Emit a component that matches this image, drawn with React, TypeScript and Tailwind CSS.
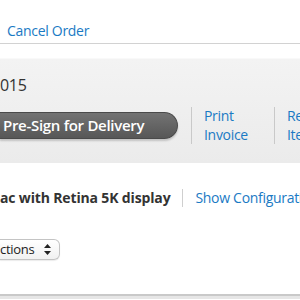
const font = { fontFamily: '"Open Sans", "Liberation Sans", sans-serif' };

function UpDownArrows() {
  return (
    <svg width="7" height="11" viewBox="0 0 7 11" className="shrink-0">
      <path d="M3.5 0 L7 4 L0 4 Z" fill="#222" />
      <path d="M3.5 11 L7 7 L0 7 Z" fill="#222" />
    </svg>
  );
}

export default function App() {
  return (
    <div
      className="w-[300px] h-[300px] overflow-hidden bg-white text-[14px] tracking-[-0.3px] text-[#333]"
      style={font}
    >
      {/* top actions */}
      <div className="h-[44px] border-b border-[#d2d2d2] pl-[7px] pt-[20px]">
        <a className="text-[#1a7ac4] leading-[20px]">Cancel Order</a>
      </div>
      <div className="h-[14px]" />

      {/* order summary band */}
      <div className="h-[105px] border-t border-[#f9f9f9] bg-gradient-to-b from-[#f3f3f3] to-[#ebebeb]">
        <div className="pt-[16px] text-[16px] leading-[20px] text-[#333] whitespace-nowrap">
          015
        </div>
        <div className="mt-[11px] flex items-center whitespace-nowrap">
          <button className="h-[27px] w-[178px] shrink-0 rounded-r-full border border-l-0 border-[#4a4a4a] bg-gradient-to-b from-[#737373] to-[#575757] pl-[3px] text-left text-[15px] font-semibold leading-[25px] tracking-[-0.3px] text-white shadow-[0_2px_2px_rgba(0,0,0,0.18)]">
            Pre-Sign for Delivery
          </button>
          <div className="ml-[13px] h-[37px] w-px shrink-0 bg-[#c9c9c9]" />
          <a className="ml-[12px] w-[70px] shrink-0 leading-[19px] text-[#1a7ac4]">
            Print
            <br />
            Invoice
          </a>
          <div className="h-[37px] w-px shrink-0 bg-[#c9c9c9]" />
          <a className="ml-[12px] shrink-0 leading-[19px] text-[#1a7ac4]">
            Return
            <br />
            Items
          </a>
        </div>
      </div>

      {/* product line */}
      <div className="mt-[25px] flex items-center whitespace-nowrap">
        <span className="font-bold tracking-[-0.15px] text-[#333] leading-[20px]">ac with Retina 5K display</span>
        <div className="ml-[12px] h-[18px] w-px shrink-0 bg-[#cfcfcf]" />
        <a className="ml-[12px] text-[#1a7ac4] leading-[20px]">Show Configuration</a>
      </div>

      {/* actions select */}
      <div className="mt-[31px] flex">
        <div className="flex h-[21px] w-[60px] items-center justify-between rounded-r-[6px] border border-l-0 border-[#c4c4c4] bg-gradient-to-b from-white to-[#f1f1f1] pr-[8px] shadow-[0_1px_1px_rgba(0,0,0,0.08)]">
          <span className="text-[13px] leading-[19px] tracking-[-0.3px] text-[#222]">ctions</span>
          <UpDownArrows />
        </div>
      </div>

      <div className="mt-[34px] h-[2px] bg-[#c9c9c9]" />
      <div className="h-[3px] bg-[#e6e6e6]" />
    </div>
  );
}
